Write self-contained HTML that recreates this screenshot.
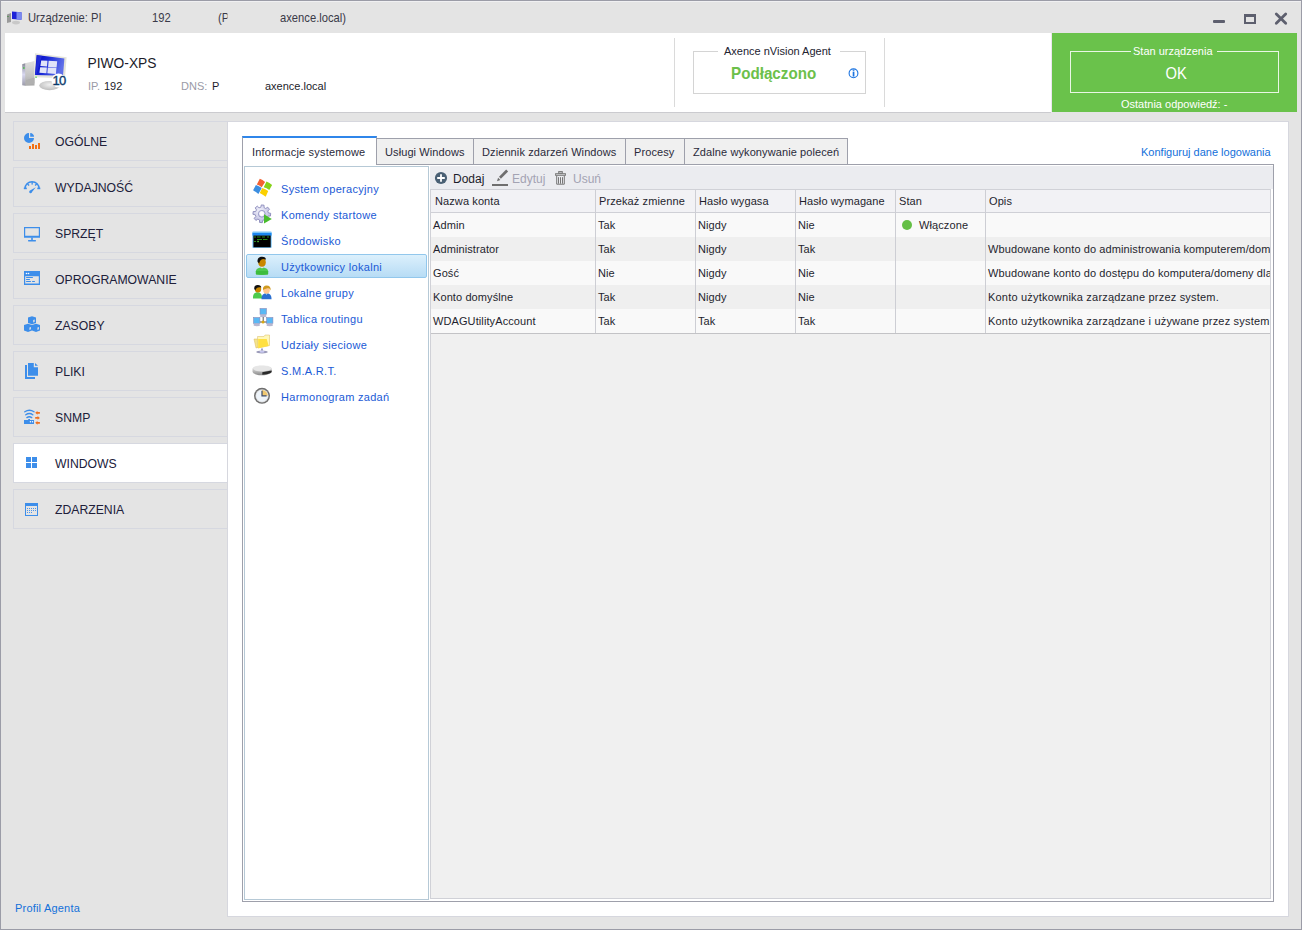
<!DOCTYPE html>
<html><head><meta charset="utf-8">
<style>
*{margin:0;padding:0;box-sizing:border-box}
html,body{width:1302px;height:930px;overflow:hidden;background:#e4e4e4;font-family:"Liberation Sans",sans-serif}
.a{position:absolute}
#win{left:0;top:0;width:1302px;height:930px;border:1px solid #9b9ca7;background:#e4e4e4}
#hl{left:1px;top:1px;width:1300px;height:1px;background:#f0f0f2}
#hdr{left:5px;top:33px;width:1046px;height:79px;background:#fff}
#hdrline{left:5px;top:112px;width:1046px;height:1px;background:#cbcbcf}
#green{left:1052px;top:33px;width:245px;height:79px;background:#6ac24b;border-left:0}
#gsep{left:1051px;top:33px;width:1px;height:80px;background:#ebe6ee}
.vsep{width:1px;background:#dadada}
.nav{left:13px;width:215px;height:40px;border:1px solid #d6d8e0;border-right:none;background:#e4e4e4}
.nav.act{background:#fff}
#panel{left:227px;top:121px;width:1062px;height:796px;border:1px solid #d6d7de;background:#fff}
.tab{top:138px;height:26px;background:#f0f0f0;border:1px solid #9ea0ab;border-bottom:none}
#page{left:242px;top:164px;width:1032px;height:738px;border:1px solid #9ea0ab;background:#fff}
#list{left:244px;top:166px;width:185px;height:734px;border:1px solid #b6c9d6;background:#fff}
#tb{left:430px;top:166px;width:843px;height:23px;background:#ebecf0}
#grid{left:430px;top:189px;width:841px;height:710px;border:1px solid #d0d1d7;background:#f0f0f0}
#ghead{left:431px;top:190px;width:839px;height:23px;background:#f2f2f5;border-bottom:1px solid #cfd0d6}
.row{left:431px;width:839px;height:24px}
.r1{background:#f9f9f9}.r2{background:#efefef}
.csep{top:190px;width:1px;height:143px;background:#cdced4}
#gbot{left:431px;top:333px;width:839px;height:1px;background:#c3c3c6}
#sel{left:246px;top:254px;width:181px;height:24px;border:1px solid #92c7ec;border-radius:2px;background:linear-gradient(#dcf0fc,#b7dcf5)}
svg{position:absolute;left:0;top:0}
text{font-family:"Liberation Sans",sans-serif}
</style></head><body>
<div class="a" id="win"></div>
<div class="a" id="hl"></div>
<div class="a" id="hdr"></div>
<div class="a" id="hdrline"></div>
<div class="a" id="green"></div><div class="a" id="gsep"></div>
<div class="a vsep" style="left:674px;top:38px;height:69px"></div>
<div class="a vsep" style="left:884px;top:38px;height:69px"></div>
<div class="a" style="left:693px;top:51px;width:173px;height:43px;border:1px solid #d4d4d4"></div>
<div class="a" style="left:718px;top:45px;width:122px;height:12px;background:#fff"></div>
<div class="a" style="left:1070px;top:51px;width:209px;height:42px;border:1px solid #e9f6e4"></div>
<div class="a" style="left:1131px;top:45px;width:86px;height:12px;background:#6ac24b"></div>

<div class="a nav" style="top:121px"></div>
<div class="a nav" style="top:167px"></div>
<div class="a nav" style="top:213px"></div>
<div class="a nav" style="top:259px"></div>
<div class="a nav" style="top:305px"></div>
<div class="a nav" style="top:351px"></div>
<div class="a nav" style="top:397px"></div>
<div class="a nav act" style="top:443px"></div>
<div class="a nav" style="top:489px"></div>

<div class="a" id="panel"></div>
<div class="a" id="page"></div>
<div class="a tab" style="left:376px;width:98px"></div>
<div class="a tab" style="left:473px;width:153px"></div>
<div class="a tab" style="left:625px;width:60px"></div>
<div class="a tab" style="left:684px;width:164px"></div>
<div class="a" style="left:242px;top:136px;width:135px;height:29px;background:#fff;border-left:1px solid #9ea0ab;border-right:1px solid #9ea0ab;border-top:2px solid #2f86ea"></div>
<div class="a" id="list"></div>
<div class="a" id="sel"></div>
<div class="a" id="tb"></div>
<div class="a" id="grid"></div>
<div class="a" id="ghead"></div>
<div class="a row r1" style="top:213px"></div>
<div class="a row r2" style="top:237px"></div>
<div class="a row r1" style="top:261px"></div>
<div class="a row r2" style="top:285px"></div>
<div class="a row r1" style="top:309px"></div>
<div class="a" id="gbot"></div>
<div class="a csep" style="left:595px"></div>
<div class="a csep" style="left:695px"></div>
<div class="a csep" style="left:795px"></div>
<div class="a csep" style="left:895px"></div>
<div class="a csep" style="left:985px"></div>

<svg width="1302" height="930" viewBox="0 0 1302 930">
<!-- title bar -->
<g font-size="12" fill="#3a3a48">
<text transform="matrix(0.935 0 0 1 28 0)" x="0" y="22">Urządzenie: PI</text>
<text transform="matrix(0.935 0 0 1 152 0)" x="0" y="22">192</text>
<clipPath id="tc"><rect x="200" y="5" width="27.5" height="25"/></clipPath><g clip-path="url(#tc)"><text transform="matrix(0.935 0 0 1 218 0)" x="0" y="22">(P</text></g>
<text transform="matrix(0.935 0 0 1 280 0)" x="0" y="22">axence.local)</text>
</g>
<g fill="#5d5f6e">
<rect x="1213" y="20" width="12" height="3" rx="1"/>
<path d="M1244 14h12v10h-12z M1246 17v5h8v-5z" fill-rule="evenodd"/>
<path d="M1276.3 14l9.4 9.2M1285.7 14l-9.4 9.2" stroke="#5d5f6e" stroke-width="2.8" stroke-linecap="round"/>
</g>
<!-- header -->
<text transform="matrix(0.92 0 0 1 87.5 0)" x="0" y="68" font-size="15" fill="#1c1c2a">PIWO-XPS</text>
<text x="88" y="90" font-size="11" fill="#9a9aa6">IP.</text>
<text x="104" y="90" font-size="11" fill="#1c1c2a">192</text>
<text x="181" y="90" font-size="11" fill="#9a9aa6">DNS:</text>
<text x="212" y="90" font-size="11" fill="#1c1c2a">P</text>
<text x="265" y="90" font-size="11" fill="#1c1c2a">axence.local</text>
<text x="724" y="55" font-size="11" fill="#222230">Axence nVision Agent</text>
<text transform="matrix(0.95 0 0 1 731 0)" x="0" y="79" font-size="16" font-weight="bold" fill="#6cc04a">Podłączono</text>
<text x="1133" y="55" font-size="11" fill="#fff">Stan urządzenia</text>
<text transform="matrix(0.92 0 0 1 1165.5 0)" x="0" y="79" font-size="16" fill="#fff">OK</text>
<text x="1121" y="108" font-size="11" fill="#fff">Ostatnia odpowiedź: -</text>
<!-- nav text -->
<g font-size="13" fill="#20203a" transform="matrix(0.94 0 0 1 55 0)">
<text x="0" y="146">OGÓLNE</text>
<text x="0" y="192">WYDAJNOŚĆ</text>
<text x="0" y="238">SPRZĘT</text>
<text x="0" y="284">OPROGRAMOWANIE</text>
<text x="0" y="330">ZASOBY</text>
<text x="0" y="376">PLIKI</text>
<text x="0" y="422">SNMP</text>
<text x="0" y="468">WINDOWS</text>
<text x="0" y="514">ZDARZENIA</text>
</g>
<text x="15" y="912" font-size="11" fill="#1370da" letter-spacing="0.2">Profil Agenta</text>
<!-- tabs -->
<g font-size="11" fill="#2a2a3a" letter-spacing="0.1">
<text x="252" y="156" letter-spacing="0.2">Informacje systemowe</text>
<text x="385" y="156">Usługi Windows</text>
<text x="482" y="156">Dziennik zdarzeń Windows</text>
<text x="634" y="156">Procesy</text>
<text x="693" y="156">Zdalne wykonywanie poleceń</text>
</g>
<text x="1141" y="156" font-size="11" fill="#1370da">Konfiguruj dane logowania</text>
<!-- list -->
<g font-size="11" fill="#1b5ad6" letter-spacing="0.3">
<text x="281" y="193">System operacyjny</text>
<text x="281" y="219">Komendy startowe</text>
<text x="281" y="245">Środowisko</text>
<text x="281" y="271">Użytkownicy lokalni</text>
<text x="281" y="297">Lokalne grupy</text>
<text x="281" y="323">Tablica routingu</text>
<text x="281" y="349">Udziały sieciowe</text>
<text x="281" y="375">S.M.A.R.T.</text>
<text x="281" y="401">Harmonogram zadań</text>
</g>
<!-- toolbar -->
<text x="453" y="183" font-size="12" fill="#1c1c2a">Dodaj</text>
<text x="512" y="183" font-size="12" fill="#a3a3b3">Edytuj</text>
<text x="573" y="183" font-size="12" fill="#a3a3b3">Usuń</text>
<!-- grid -->
<g font-size="11" fill="#1f1f2e" letter-spacing="0.1">
<text x="435" y="205">Nazwa konta</text>
<text x="599" y="205">Przekaż zmienne</text>
<text x="699" y="205">Hasło wygasa</text>
<text x="799" y="205">Hasło wymagane</text>
<text x="899" y="205">Stan</text>
<text x="989" y="205">Opis</text>
<text x="433" y="229">Admin</text><text x="598" y="229">Tak</text><text x="698" y="229">Nigdy</text><text x="798" y="229">Nie</text><text x="919" y="229">Włączone</text>
<text x="433" y="253">Administrator</text><text x="598" y="253">Tak</text><text x="698" y="253">Nigdy</text><text x="798" y="253">Tak</text>
<text x="433" y="277">Gość</text><text x="598" y="277">Nie</text><text x="698" y="277">Nigdy</text><text x="798" y="277">Nie</text>
<text x="433" y="301">Konto domyślne</text><text x="598" y="301">Tak</text><text x="698" y="301">Nigdy</text><text x="798" y="301">Nie</text>
<text x="433" y="325">WDAGUtilityAccount</text><text x="598" y="325">Tak</text><text x="698" y="325">Tak</text><text x="798" y="325">Tak</text>
<clipPath id="dc"><rect x="986" y="213" width="284" height="120"/></clipPath>
<g clip-path="url(#dc)" letter-spacing="0.2"><text x="988" y="253" letter-spacing="0.1">Wbudowane konto do administrowania komputerem/domeną</text><text x="988" y="277" letter-spacing="0.1">Wbudowane konto do dostępu do komputera/domeny dla</text><text x="988" y="301">Konto użytkownika zarządzane przez system.</text><text x="988" y="325">Konto użytkownika zarządzane i używane przez system</text></g>
</g>
<circle cx="907" cy="225" r="5" fill="#64bf45"/>

<!-- title icon -->
<g>
<path d="M7 14.5l4-1.5v9l-4 1z" fill="#9a9a9a"/>
<path d="M7.5 16h1v1h-1z" fill="#2a8a2a"/>
<path d="M11.5 11l10.5 0.8v8.6l-10.5-0.8z" fill="#e8e8e8"/>
<path d="M12 11.5l9.5 0.7v7.6l-9.5-0.7z" fill="#1d22d8"/>
<path d="M16.5 12l5 0.3v7.5l-5-0.3z" fill="#7a8af0"/>
<ellipse cx="16" cy="22.6" rx="4" ry="1.8" fill="#c8c8c8"/>
</g>
<!-- header computer -->
<g>
<defs>
<linearGradient id="tw" x1="0" x2="1"><stop offset="0" stop-color="#c9c9d6"/><stop offset="0.3" stop-color="#a9a9b0"/><stop offset="1" stop-color="#d8d8d8"/></linearGradient>
<linearGradient id="scr" x1="0" y1="0" x2="1" y2="0.3"><stop offset="0" stop-color="#0000c0"/><stop offset="0.45" stop-color="#1a2ad8"/><stop offset="1" stop-color="#6070e8"/></linearGradient>
<radialGradient id="base" cx="0.5" cy="0.4" r="0.6"><stop offset="0" stop-color="#f0f0f0"/><stop offset="1" stop-color="#bdbdbd"/></radialGradient>
</defs>
<linearGradient id="tws" x1="0" y1="0" x2="0" y2="1"><stop offset="0" stop-color="#e0e0e0"/><stop offset="0.6" stop-color="#c4c4c4"/><stop offset="1" stop-color="#a8a8a8"/></linearGradient>
<linearGradient id="twf" x1="0" y1="0" x2="0" y2="1"><stop offset="0" stop-color="#8a8a98"/><stop offset="0.5" stop-color="#d8d8f0"/><stop offset="1" stop-color="#9a9aa8"/></linearGradient>
<path d="M25 63.2L34.5 61v24.5L25 85.8z" fill="url(#tws)"/>
<path d="M22.2 64.2L25.2 63.2v22.6l-3-0.5z" fill="url(#twf)"/>
<path d="M26 80l8.5-2.5v6l-8.5 1.5z" fill="#b0b0b0"/>
<rect x="23" y="67.3" width="1.6" height="1.4" fill="#40c040"/>
<ellipse cx="49.6" cy="85.6" rx="10.4" ry="4.6" fill="url(#base)"/>
<path d="M35 53.3L66.6 57.2L65 78.2L34 77.3z" fill="#e4e4da"/>
<path d="M36.6 55L64.4 58.4L63 75.8L34.9 75.1z" fill="url(#scr)"/>
<path d="M37 55.2l5 0.6-5.8 19.3h-1.2z" fill="#3040e0" opacity="0.6"/>
<rect x="35.3" y="76.6" width="1.5" height="1.2" fill="#50d050"/>
<path d="M41.2 60.4l6.3 0.4-0.5 5.6-6.6-0.4z M48.6 60.7l8.6 0.6-0.6 6.2-8.5-0.4z M40.2 67.2l6.7 0.3-0.5 5.8-7-0.6z M47.8 67.6l8.6 0.3-0.5 6.2-8.6-0.8z" fill="#e2e4f8"/>
<circle cx="58.5" cy="80.5" r="7" fill="#fff"/>
<text x="52.4" y="85.3" font-size="13" fill="#0b3a6b" stroke="#0b3a6b" stroke-width="0.35" letter-spacing="-0.6">10</text>
</g>
<!-- info icon -->
<g>
<circle cx="853.5" cy="73.3" r="4.4" fill="none" stroke="#1c74e0" stroke-width="1.1"/>
<rect x="852.7" y="71.6" width="1.7" height="5" fill="#1c74e0"/>
<rect x="852.7" y="69.6" width="1.7" height="1.2" fill="#1c74e0"/>
</g>
<!-- nav icons -->
<g fill="#3d8eea">
<path d="M29 133v5h5a5 5 0 1 1-5-5z"/>
<path d="M30.2 132.9a4.3 4.3 0 0 1 3.9 3.9h-3.9z"/>
<g fill="#f26f12"><rect x="29" y="146" width="2" height="3"/><rect x="32" y="144" width="2" height="5"/><rect x="35" y="145" width="2" height="4"/><rect x="38" y="143" width="2" height="6"/></g>
</g>
<g fill="none" stroke="#3d8eea" stroke-width="1.5">
<path d="M24.9 188.8a7.15 7.15 0 0 1 14.3 0" />
</g>
<g fill="#3d8eea">
<rect x="23.8" y="187.6" width="3" height="1.6"/><rect x="37.3" y="187.6" width="3" height="1.6"/>
<rect x="31.5" y="182" width="1.3" height="2.6"/>
<path d="M27 184.5l1 -1 1.6 1.5-1 1z M36.2 183.5l1 1-1.6 1.5-1-1z"/>
<path d="M30 190.5l5.8-3.2-3.8 4.6a1.4 1.4 0 1 1-2-1.4z"/>
</g>
<g fill="#3d8eea">
<path d="M24 227h16v10.8h-16z M25.2 228.2v7.6h13.6v-7.6z" fill-rule="evenodd"/>
<rect x="31.2" y="237.5" width="1.6" height="2.6"/>
<rect x="28" y="240" width="8" height="1.4" rx="0.6"/>
</g>
<g fill="#3d8eea">
<path d="M24 271h16v14h-16z M25.2 276.2v7.4h13.6v-7.4z" fill-rule="evenodd"/>
<circle cx="26.5" cy="273.5" r="0.8" fill="#fff"/><circle cx="28.5" cy="273.5" r="0.8" fill="#fff"/>
<rect x="26" y="277" width="7" height="1" rx="0.5"/><rect x="26" y="279" width="4" height="1" rx="0.5"/><rect x="26" y="281" width="5" height="1" rx="0.5"/><rect x="32" y="281" width="3" height="1" rx="0.5"/>
</g>
<g fill="#3d8eea">
<path d="M28 317.5l4-1.3 4 1.3v5.5l-4 1.3-4-1.3z"/>
<path d="M24 325l4-1.3 4 1.3v5.5l-4 1.5-4-1.5z"/>
<path d="M32 325l4-1.3 4 1.3v5.5l-4 1.5-4-1.5z"/>
<path d="M33.3 320l1.3-0.6v2.3l-1.3 0.7z M29.5 327.6l1.3-0.6v2.3l-1.3 0.7z M37.5 327.6l1.3-0.6v2.3l-1.3 0.7z" fill="#fbeee0"/>
</g>
<g fill="#3d8eea">
<path d="M28 363h5.8v4.2h4.2v8.6h-10z"/>
<path d="M35 363l3 2.8h-3z"/>
<path d="M25 365h2v12h8v2h-10z"/>
</g>
<g>
<path d="M24.8 411.8q4.6-3.2 9.2 0 M25.8 414.8q3.6-2.6 7 0 M26.9 417.6q2.4-1.8 4.8 0" fill="none" stroke="#3d8eea" stroke-width="1.4" stroke-linecap="round"/>
<rect x="24" y="420" width="10" height="4" fill="#3d8eea"/>
<rect x="28.2" y="419" width="1.8" height="1.2" fill="#3d8eea"/>
<circle cx="30.4" cy="421.8" r="0.7" fill="#fff"/><circle cx="32.5" cy="421.8" r="0.7" fill="#fff"/>
<path d="M35.2 412.8l2.3-1.8v1.1h2.4v1.6h-2.4v1.1z" fill="#f07020"/>
<path d="M39.9 418l-2.3 1.8v-1.1h-2.4v-1.6h2.4v-1.1z" fill="#f07020"/>
<path d="M35.2 422.8l2.3-1.8v1.1h2.4v1.6h-2.4v1.1z" fill="#f07020"/>
</g>
<g fill="#3d8eea">
<rect x="26" y="457" width="5" height="5"/><rect x="32" y="457" width="5" height="5"/>
<rect x="26" y="463" width="5" height="5"/><rect x="32" y="463" width="5" height="5"/>
</g>
<g fill="#3d8eea">
<path d="M25 503h13v13h-13z M26 506v9h11v-9z" fill-rule="evenodd"/>
<g fill="#4a94ea"><rect x="27" y="508" width="1" height="1"/><rect x="29" y="508" width="1" height="1"/><rect x="31" y="508" width="1" height="1"/><rect x="33" y="508" width="1" height="1"/><rect x="35" y="508" width="1" height="1"/>
<rect x="27" y="510" width="1" height="1"/><rect x="29" y="510" width="1" height="1"/><rect x="31" y="510" width="1" height="1"/><rect x="33" y="510" width="1" height="1"/><rect x="35" y="510" width="1" height="1"/>
<rect x="27" y="512" width="1" height="1"/><rect x="29" y="512" width="1" height="1"/><rect x="31" y="512" width="1" height="1"/></g>
</g>
<!-- list icons -->
<g>
<path d="M259.8 178.8q2.8 0.8 5.3 3.2l-3.4 5.2q-2.4-2-4.9-2.8z" fill="#f26232"/>
<path d="M266.5 181.6q3 1.2 5.6 3.4l-2.8 5q-2.6-2.2-5.6-2.8z" fill="#86d21a"/>
<path d="M255.9 185q3 0.8 5.8 3l-3.3 5.9q-2.6-2-5.3-3.6z" fill="#3b8ee0"/>
<path d="M262.3 188q3.2 1 5.9 3.1l-2.5 5.6q-2.8-2-5.9-3.7z" fill="#fbd000"/>
</g>
<g>
<defs><radialGradient id="gr" cx="0.4" cy="0.35" r="0.7"><stop offset="0" stop-color="#f4f4fc"/><stop offset="1" stop-color="#b4b4dc"/></radialGradient></defs>
<path d="M260.81 207.28 L261.29 204.91 L264.06 205.19 L264.07 207.60 L265.71 208.48 L267.72 207.16 L269.49 209.31 L267.79 211.02 L268.32 212.81 L270.69 213.29 L270.41 216.06 L268.00 216.07 L267.12 217.71 L268.44 219.72 L266.29 221.49 L264.58 219.79 L262.79 220.32 L262.31 222.69 L259.54 222.41 L259.53 220.00 L257.89 219.12 L255.88 220.44 L254.11 218.29 L255.81 216.58 L255.28 214.79 L252.91 214.31 L253.19 211.54 L255.60 211.53 L256.48 209.89 L255.16 207.88 L257.31 206.11 L259.02 207.81z" fill="url(#gr)" stroke="#8080b4" stroke-width="0.8" stroke-linejoin="round"/>
<circle cx="261.8" cy="213.8" r="3.4" fill="none" stroke="#9a9ac8" stroke-width="1"/>
<circle cx="261.8" cy="213.8" r="2.2" fill="#fff"/>
<path d="M264 214.3v9.2l7.8-4.6z" fill="#48bc2c"/>
</g>
<g>
<rect x="252.3" y="231.5" width="19.4" height="16.6" rx="1" fill="#7cc6f8"/>
<rect x="252.5" y="233" width="19" height="2.6" fill="#1a86f0"/>
<rect x="253.4" y="235.5" width="17.3" height="11.8" fill="#000"/>
<g fill="#2a8a1a"><rect x="254" y="236.5" width="2" height="1"/><rect x="257" y="236.5" width="3.5" height="1"/><rect x="262" y="236.5" width="3" height="1"/><rect x="267" y="236.5" width="2" height="1"/><rect x="257" y="239" width="5" height="1"/><rect x="263" y="239" width="4.5" height="1"/><rect x="254" y="241" width="2" height="1"/><rect x="257.3" y="240.8" width="1.5" height="1.4" fill="#5cd040"/></g>
</g>
<g>
<ellipse cx="262" cy="271.2" rx="6.2" ry="3.8" fill="#4fc94f"/>
<rect x="255.8" y="271" width="12.4" height="3.8" rx="1" fill="#3ebc3e"/>
<path d="M260.5 267h3l-1.5 1.5z" fill="#f4e4f0"/>
<ellipse cx="262" cy="262.3" rx="3.8" ry="4.4" fill="#c98700"/>
<path d="M257.6 262c-0.5-3.5 1.5-5.3 4.5-5.3 2.5 0 4 1.2 3.8 3-1.5-1-3.8-1-5 0.2-1 0.8-1.3 1.8-1.6 3.5z" fill="#111"/>
</g>
<g>
<path d="M253 297c0-3 2-4.8 4.5-4.8s4.5 1.8 4.5 4.8v1.5h-9z" fill="#4dcb4d"/>
<ellipse cx="258" cy="289" rx="3.2" ry="3.6" fill="#c98700"/>
<path d="M254.3 289c-0.4-2.6 1.2-4 3.4-4 2.3 0 3.6 1 3.6 2.5-1.8-0.7-3.5-0.3-4.5 0.6-0.8 0.8-1.2 1.6-1.5 2.3z" fill="#111"/>
<path d="M261.5 298.5c0-3.3 2.2-5.2 5-5.2s5 1.9 5 5.2v0.8h-10z" fill="#2a6fd0"/>
<path d="M265.5 293.5h2l-1 1.5z" fill="#9ad8f8"/>
<ellipse cx="266.5" cy="290" rx="3.3" ry="3.8" fill="#ffc890"/>
<path d="M263 290c-0.5-3 1.2-4.5 3.6-4.5 2.8 0 4.4 1.8 4 5-0.6-1.3-1-2-2-2.3-1.8 0-3.6 0.5-5.6 1.8z" fill="#d09a20"/>
</g>
<g>
<rect x="260" y="308.5" width="6.4" height="5.8" fill="#5ab8f4" stroke="#8a8ab8" stroke-width="0.6"/>
<ellipse cx="263.2" cy="316" rx="3.3" ry="1.2" fill="#b8b8d0"/>
<rect x="253.5" y="317.5" width="6.4" height="5.8" fill="#5ab8f4" stroke="#8a8ab8" stroke-width="0.6"/>
<ellipse cx="256.7" cy="325" rx="3.3" ry="1.2" fill="#b8b8d0"/>
<rect x="266.5" y="317.5" width="6.4" height="5.8" fill="#5ab8f4" stroke="#8a8ab8" stroke-width="0.6"/>
<ellipse cx="269.7" cy="325" rx="3.3" ry="1.2" fill="#b8b8d0"/>
<path d="M263.2 317v4M260 322h6.5" stroke="#444" stroke-width="0.9"/>
<circle cx="263" cy="322" r="1.5" fill="#d8a810"/>
</g>
<g>
<path d="M254 339h4l1-0.5 0.5 8.5-3.5 1z" fill="#f4e48a" stroke="#d8b860" stroke-width="0.5"/>
<path d="M257.5 336.5h6.5l1-1.5h4.5v10.5l-11.5 2.5z" fill="#fff8b8" stroke="#d8b860" stroke-width="0.5"/>
<path d="M258.2 339h8.5l2 7-10.5 2.3z" fill="#ffe040"/>
<path d="M262 348.5v2" stroke="#6060a0" stroke-width="1.2"/>
<ellipse cx="262" cy="352" rx="5.8" ry="1.4" fill="#9a9ab8"/>
<ellipse cx="262" cy="351.7" rx="2.5" ry="1" fill="#c8c8f0"/>
</g>
<g>
<defs><linearGradient id="drv" x1="0" y1="0" x2="0" y2="1"><stop offset="0" stop-color="#f4f4f4"/><stop offset="0.5" stop-color="#c4c4c4"/><stop offset="1" stop-color="#8a8a8a"/></linearGradient></defs>
<path d="M252.5 368.8c0.5-2 4-3.5 9.5-3.5s9.5 1.5 9.8 3.5l0 2.6c-0.3 1.8-4 3.6-9.8 3.8s-9.5-1.6-9.5-3.6z" fill="url(#drv)"/>
<path d="M253 368.6c0.5-1.6 4-2.8 9-2.8s9 1.2 9.3 2.8c-0.5 1.5-4.3 2.6-9.3 2.8s-8.6-1.2-9-2.8z" fill="#e6e6e6"/>
<path d="M262.3 372.2l9.3-1.6v1.4c-0.4 1-3 2.2-9.3 2.8z" fill="#2a2a2a"/>
</g>
<g>
<circle cx="262" cy="395.8" r="8" fill="#6e6e6e"/>
<circle cx="262" cy="395.8" r="6.6" fill="#d8d8d8"/>
<circle cx="262" cy="395.8" r="5.9" fill="#eef4fa"/>
<path d="M262 389.9a5.9 5.9 0 0 1 5.9 5.9h-5.9z" fill="#f0c870"/>
<path d="M262 390.8v5h4.6" fill="none" stroke="#3a4a68" stroke-width="1.2"/>
</g>
<!-- toolbar icons -->
<g>
<circle cx="441" cy="178" r="6.1" fill="#4a6074"/>
<path d="M441 174.2v7.6M437.2 178h7.6" stroke="#fff" stroke-width="1.8"/>
</g>
<g fill="#6e6e6e">
<path d="M499 176.8l7.2-7.2 1.9 1.9-7.2 7.2z"/><path d="M497 181.2l1.1-3.4 2.3 2.3z"/>
<rect x="492" y="184" width="16" height="2"/>
</g>
<g fill="none" stroke="#777" stroke-width="1">
<rect x="558.7" y="171.6" width="3.6" height="1.6"/>
<rect x="555.6" y="173.7" width="9.8" height="1.6"/>
<path d="M556.7 175.5v8.7h7.6v-8.7"/>
</g>
<g fill="#777"><rect x="558" y="177.2" width="1" height="6.5"/><rect x="560" y="177.2" width="1" height="6.5"/><rect x="562" y="177.2" width="1" height="6.5"/></g>

</svg>
</body></html>
